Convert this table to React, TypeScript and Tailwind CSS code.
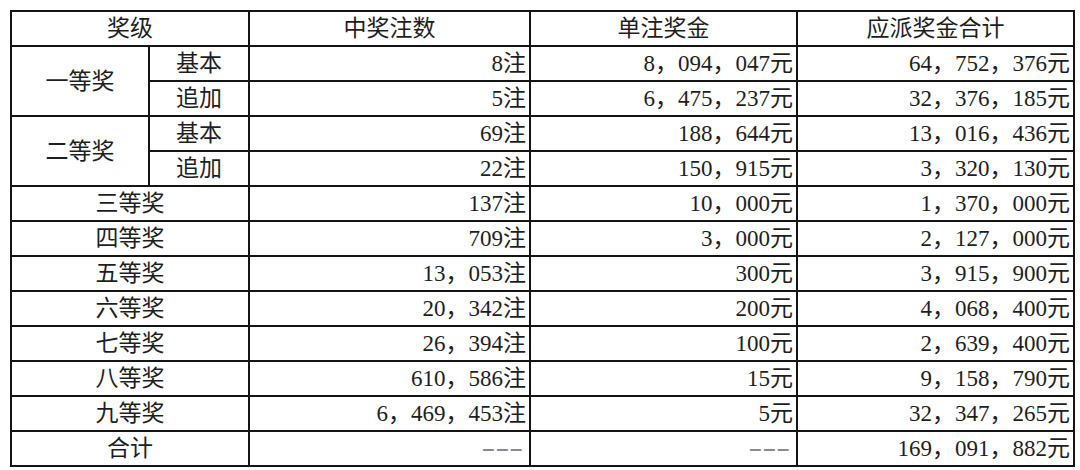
const rows: [string, string, string, string][] = [
  ["三等奖", "137注", "10，000元", "1，370，000元"],
  ["四等奖", "709注", "3，000元", "2，127，000元"],
  ["五等奖", "13，053注", "300元", "3，915，900元"],
  ["六等奖", "20，342注", "200元", "4，068，400元"],
  ["七等奖", "26，394注", "100元", "2，639，400元"],
  ["八等奖", "610，586注", "15元", "9，158，790元"],
  ["九等奖", "6，469，453注", "5元", "32，347，265元"],
];

const cell = "border-2 border-[#151515] h-[35px] p-0 leading-none";
const num = `${cell} text-right pr-[3px]`;
const mid = `${cell} text-center`;

function Dash() {
  return (
    <span className="inline-block origin-right scale-x-[1.8] mr-[3px] text-[#8a8a8a] font-bold">
      ---
    </span>
  );
}

export default function App() {
  return (
    <div
      className="bg-white w-[1080px] h-[470px] pt-[10px] pl-[10px] text-[23px] text-[#1e1e1e]"
      style={{ fontFamily: '"Liberation Serif", "Noto Sans CJK SC", serif' }}
    >
      <table className="table-fixed border-collapse w-[1063px]">
        <colgroup>
          <col className="w-[138px]" />
          <col className="w-[100px]" />
          <col className="w-[281px]" />
          <col className="w-[267px]" />
          <col className="w-[277px]" />
        </colgroup>
        <tbody>
          <tr>
            <td colSpan={2} className={mid}>奖级</td>
            <td className={mid}>中奖注数</td>
            <td className={mid}>单注奖金</td>
            <td className={mid}>应派奖金合计</td>
          </tr>
          <tr>
            <td rowSpan={2} className={mid}>一等奖</td>
            <td className={mid}>基本</td>
            <td className={num}>8注</td>
            <td className={num}>8，094，047元</td>
            <td className={num}>64，752，376元</td>
          </tr>
          <tr>
            <td className={mid}>追加</td>
            <td className={num}>5注</td>
            <td className={num}>6，475，237元</td>
            <td className={num}>32，376，185元</td>
          </tr>
          <tr>
            <td rowSpan={2} className={mid}>二等奖</td>
            <td className={mid}>基本</td>
            <td className={num}>69注</td>
            <td className={num}>188，644元</td>
            <td className={num}>13，016，436元</td>
          </tr>
          <tr>
            <td className={mid}>追加</td>
            <td className={num}>22注</td>
            <td className={num}>150，915元</td>
            <td className={num}>3，320，130元</td>
          </tr>
          {rows.map((r) => (
            <tr key={r[0]}>
              <td colSpan={2} className={mid}>{r[0]}</td>
              <td className={num}>{r[1]}</td>
              <td className={num}>{r[2]}</td>
              <td className={num}>{r[3]}</td>
            </tr>
          ))}
          <tr>
            <td colSpan={2} className={mid}>合计</td>
            <td className={num}><Dash /></td>
            <td className={num}><Dash /></td>
            <td className={num}>169，091，882元</td>
          </tr>
        </tbody>
      </table>
    </div>
  );
}
